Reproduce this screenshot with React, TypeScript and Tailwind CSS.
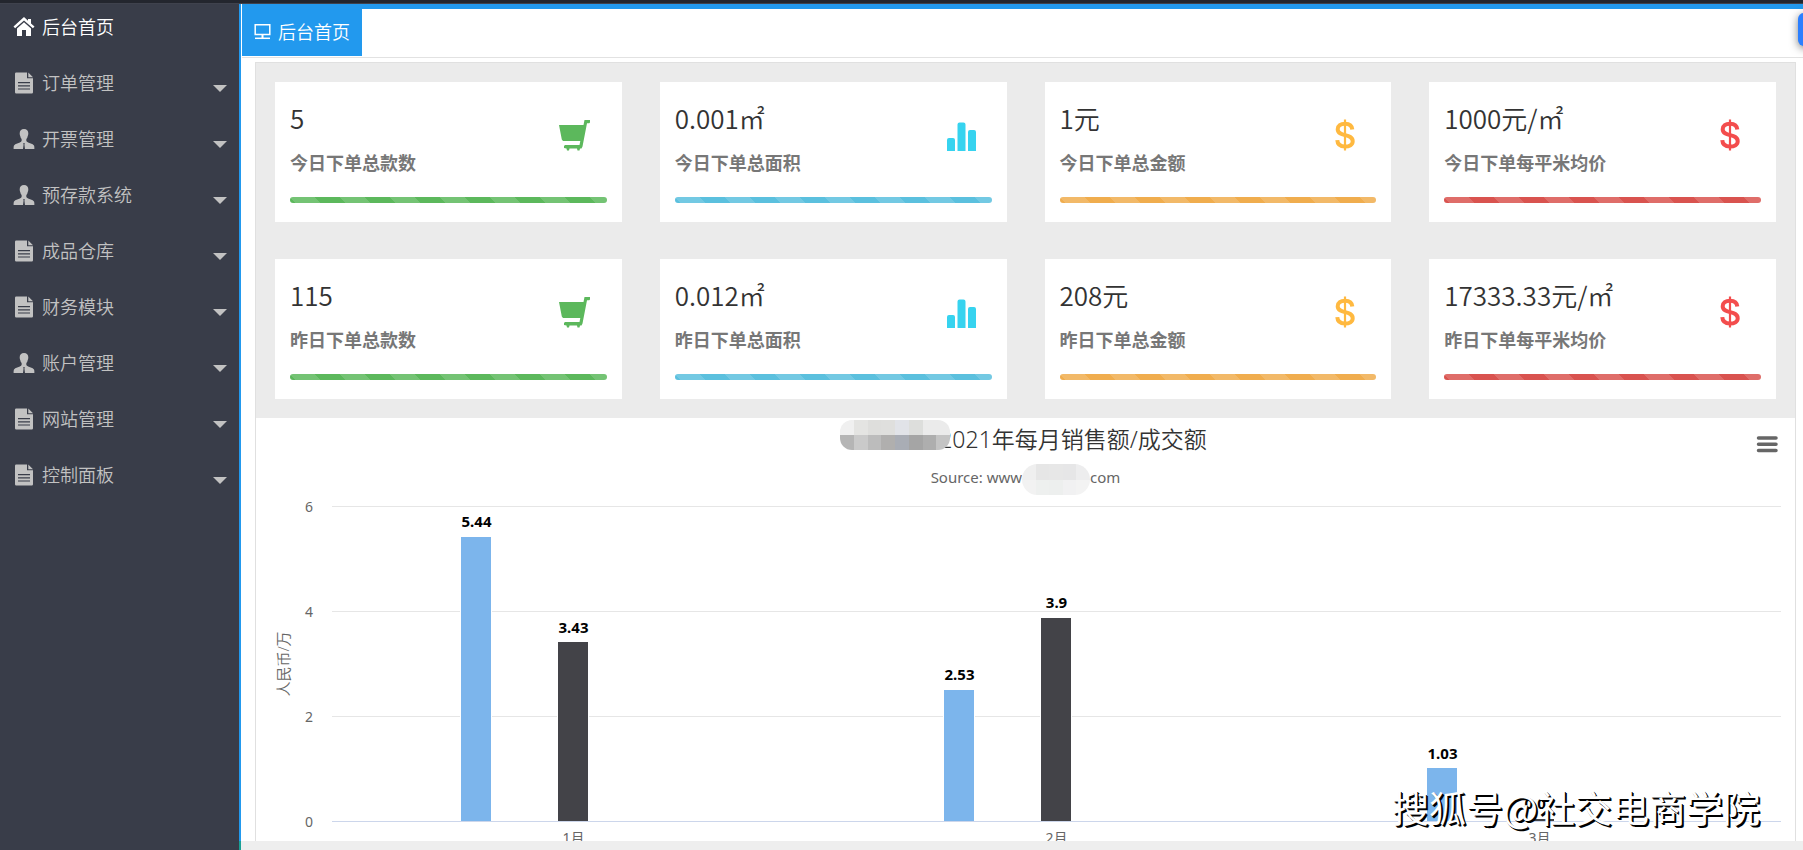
import type { ReactNode } from "react";

type IconName = "home" | "file" | "user";

const menus: { icon: IconName; label: string }[] = [
    { icon: "file", label: "订单管理" },
    { icon: "user", label: "开票管理" },
    { icon: "user", label: "预存款系统" },
    { icon: "file", label: "成品仓库" },
    { icon: "file", label: "财务模块" },
    { icon: "user", label: "账户管理" },
    { icon: "file", label: "网站管理" },
    { icon: "file", label: "控制面板" },
];

const kinds = {
    count: { icon: <CartIcon />, bar: "bg-[#5cb85c]" },
    area: { icon: <BarsIcon />, bar: "bg-[#5bc0de]" },
    amount: { icon: <DollarIcon className="text-[#ffb940]" />, bar: "bg-[#f0ad4e]" },
    price: { icon: <DollarIcon className="text-[#f34d4d]" />, bar: "bg-[#d9534f]" },
};

const stats: { kind: keyof typeof kinds; value: string; label: string }[] = [
    { kind: "count", value: "5", label: "今日下单总款数" },
    { kind: "area", value: "0.001㎡", label: "今日下单总面积" },
    { kind: "amount", value: "1元", label: "今日下单总金额" },
    { kind: "price", value: "1000元/㎡", label: "今日下单每平米均价" },
    { kind: "count", value: "115", label: "昨日下单总款数" },
    { kind: "area", value: "0.012㎡", label: "昨日下单总面积" },
    { kind: "amount", value: "208元", label: "昨日下单总金额" },
    { kind: "price", value: "17333.33元/㎡", label: "昨日下单每平米均价" },
];

const months = [
    { name: "1月", sales: 5.44, deals: 3.43 },
    { name: "2月", sales: 2.53, deals: 3.9 },
    { name: "3月", sales: 1.03, deals: 0.07 },
];

// --- ICONS ---
function MenuIcon({ name }: { name: IconName }) {
    return (
        <svg viewBox="0 0 22 22" className="h-[22px] w-[22px] shrink-0" fill="currentColor" aria-hidden="true">
            {name === "home" && (
                <>
                    <path d="M11 1 0.5 10.6l1.6 1.7L11 4.4l8.9 7.9 1.6-1.7L18 7.4V3h-3v1.7z" />
                    <path d="M11 6.2 4 12.4V20h5v-6h4v6h5v-7.6z" />
                </>
            )}
            {name === "file" && (
                <path
                    fillRule="evenodd"
                    d="M3.2 .5H14v5.8h6v14a1.2 1.2 0 0 1-1.2 1.2H3.2A1.2 1.2 0 0 1 2 20.3V1.7A1.2 1.2 0 0 1 3.2 .5zM15.3 .5 20 5.2h-4.7zM5 10v1.2h12V10zM5 13.2v1.2h12v-1.2zM5 16.4v1.2h12v-1.2z"
                />
            )}
            {name === "user" && (
                <path d="M11 1c2.8 0 4.3 1.7 4.3 4.3 0 1.3-.2 2-.6 2.9-.3.8-.3 1.5-1 2.3-.6.7-.6 2.7.2 3.2 2 1.3 6 2 7.1 3.7.4.7.4 2.2.4 3.6h-9.4l-.6-4.5.6-1.3h-2l.6 1.3-.6 4.5H.6c0-1.4 0-2.9.4-3.6 1.1-1.7 5.1-2.4 7.1-3.7.8-.5.8-2.5.2-3.2-.7-.8-.7-1.5-1-2.3-.4-.9-.6-1.6-.6-2.9C6.7 2.7 8.2 1 11 1z" />
            )}
        </svg>
    );
}

function CartIcon() {
    return (
        <svg viewBox="0 0 32 32" className="mr-[2px] h-8 w-8 text-[#5cb85c]" fill="currentColor" aria-hidden="true">
            <path d="M1 6h24.5L26.5 1H32v2.5l-.8.7H29L24.5 27.5l-1 2H22l-.5 2h-2l-.5-2h-7.5l-.5 2h-2l-.5-2L6 29v-2l1-1h14.5l.8-4H5L3.8 20.5z" />
        </svg>
    );
}

function BarsIcon() {
    return (
        <svg viewBox="0 0 32 32" className="h-8 w-8 text-[#36d3ef]" fill="currentColor" aria-hidden="true">
            <path d="M2 32V21a2 2 0 0 1 2-2h4a2 2 0 0 1 2 2v11zM12.5 32V5.5a2 2 0 0 1 2-2h4a2 2 0 0 1 2 2V32zM23 32V13a2 2 0 0 1 2-2h4a2 2 0 0 1 2 2v19z" />
        </svg>
    );
}

function DollarIcon({ className }: { className: string }) {
    return (
        <svg viewBox="0 0 32 32" className={`h-8 w-8 ${className}`} fill="none" stroke="currentColor" aria-hidden="true">
            <path strokeWidth="4" d="M23.3 10.5C23 6.5 20 4.7 16 4.7c-4.3 0-7.3 2-7.3 5.5 0 8 15 3.8 15 12 0 3.5-3.4 5.4-7.7 5.4-4.5 0-7.5-2.2-7.7-6.4" />
            <path strokeWidth="2.2" d="M16 .5v31" />
        </svg>
    );
}

function MonitorIcon() {
    return (
        <svg viewBox="0 0 17 17" className="h-[17px] w-[17px]" fill="none" stroke="currentColor" aria-hidden="true">
            <path strokeWidth="1.5" d="M1.2 1.8h14.6v9.6H1.2z" />
            <path strokeWidth="2" d="M8.5 11.5V15" />
            <path strokeWidth="1.5" d="M1 15.3h15" />
        </svg>
    );
}

// --- PIXELATED PATCHES ---
const titleMosaic = [
    ["#f0f0f0", "#e4e4e2", "#dededc", "#dfdfdd", "#e1e3e8", "#dddedc", "#ebebeb", "#ebebeb"],
    ["#b5b5b5", "#cacaca", "#bcbcbc", "#b0afae", "#a9adb5", "#a5a5a5", "#aeaeae", "#c4c4c4"],
];

const sourceMosaic = [
    ["#efefef", "#e6e6e6", "#e7e7e7", "#e6e6e7", "#ededee"],
    ["#f2f2f2", "#eef0ef", "#edefee", "#f1f1f2", "#f3f3f3"],
];

function Mosaic({ rows, className }: { rows: string[][]; className: string }) {
    return (
        <span className={`absolute flex flex-col overflow-hidden ${className}`} aria-hidden="true">
            {rows.map((row, i) => (
                <span key={i} className="flex flex-1">
                    {row.map((color, j) => (
                        <span key={j} className="flex-1" style={{ backgroundColor: color }} />
                    ))}
                </span>
            ))}
        </span>
    );
}

function StatCard({ kind, value, label }: { kind: keyof typeof kinds; value: string; label: string }) {
    const { icon, bar } = kinds[kind];
    return (
        <div className="h-[140px] bg-white px-[15px] pt-[18px]">
            <div className="flex items-start justify-between">
                <div>
                    <p className="text-[26px] leading-9 font-[350] whitespace-nowrap text-[#333]">{value}</p>
                    <p className="mt-2 text-[18px] leading-9 font-bold whitespace-nowrap text-[#777]">{label}</p>
                </div>
                <div className="mt-[19px] mr-[15px]">{icon}</div>
            </div>
            <div
                role="progressbar"
                aria-label={label}
                aria-valuenow={100}
                className={`mt-[17px] h-[6px] rounded-full bg-[linear-gradient(45deg,rgba(255,255,255,.15)_25%,transparent_25%,transparent_50%,rgba(255,255,255,.15)_50%,rgba(255,255,255,.15)_75%,transparent_75%)] bg-[length:50px_50px] ${bar}`}
            />
        </div>
    );
}

// --- CHART ---
const UNIT = 52.5;
const ZERO = 331;

function Bar({ x, shift, value, fill }: { x: string; shift: number; value: number; fill: string }) {
    const height = value * UNIT;
    const top = ZERO - height + 1;
    return (
        <g transform={`translate(${shift} 0)`}>
            <svg x={x} overflow="visible">
                <rect x={-16} y={top} width={31} height={height} fill={fill} stroke="#fff" />
                <text x={0} y={top - 9} textAnchor="middle" fill="#000" className="text-[15px] font-bold">
                    {value}
                </text>
            </svg>
        </g>
    );
}

function SalesChart() {
    return (
        <section className="min-h-0 flex-1 overflow-hidden bg-white font-['Noto_Sans','Noto_Sans_CJK_SC',sans-serif]">
            <header className="relative h-[72px] text-center">
                <h2 className="pt-1 text-[23px] leading-[34px] font-[350] text-[#333]">
                    <span className="relative mr-1 inline-block pl-[99px]">
                        2021年每月销售额/成交额
                        <Mosaic rows={titleMosaic} className="top-[-2px] left-0 h-[30px] w-[110px] rounded-xl" />
                    </span>
                </h2>
                <p className="mt-2 text-[15px] leading-[26px] text-[#666]">
                    Source: www
                    <span className="relative inline-block w-[68px]">
                        <Mosaic rows={sourceMosaic} className="top-[-19px] left-0 h-[31px] w-[68px] rounded-2xl" />
                    </span>
                    com
                </p>
                <button type="button" aria-label="Chart context menu" className="absolute top-[17px] right-4 text-[#666]">
                    <svg viewBox="0 0 24 20" className="h-5 w-6" stroke="currentColor" strokeWidth="3.5" strokeLinecap="round">
                        <path d="M3.5 3h17.5M3.5 9.3h17.5M3.5 15.6h17.5" />
                    </svg>
                </button>
            </header>
            <div className="flex pr-[14px]">
                <svg className="h-[360px] w-[76px] shrink-0" fill="#666">
                    <text transform="translate(33 174) rotate(-90)" textAnchor="middle" className="text-[15px] font-[350]">
                        人民币/万
                    </text>
                    {[6, 4, 2, 0].map((tick) => (
                        <text key={tick} x={57} y={ZERO - tick * UNIT + 6} textAnchor="end" className="text-[14px]">
                            {tick}
                        </text>
                    ))}
                </svg>
                <svg className="h-[360px] min-w-0 flex-1 overflow-visible" shapeRendering="crispEdges">
                    {[6, 4, 2].map((tick) => (
                        <rect key={tick} y={Math.round(ZERO - tick * UNIT)} width="100%" height="1" fill="#e6e6e6" />
                    ))}
                    {months.map((month, i) => {
                        const x = `${((i + 0.5) / months.length) * 100}%`;
                        return (
                            <g key={month.name}>
                                <Bar x={x} shift={-97} value={month.sales} fill="#7cb5ec" />
                                <Bar x={x} shift={0} value={month.deals} fill="#434348" />
                                <text x={x} y={ZERO + 22} textAnchor="middle" fill="#666" className="text-[14px]">
                                    {month.name}
                                </text>
                            </g>
                        );
                    })}
                    <rect y={ZERO} width="100%" height="1" fill="#ccd6eb" />
                </svg>
            </div>
        </section>
    );
}

function SideItem({ icon, children, active }: { icon: IconName; children: ReactNode; active?: boolean }) {
    return (
        <li>
            <a
                href="#"
                className={`flex items-center pr-3 pl-[13px] text-[18px] whitespace-nowrap ${active ? "h-[51px] pb-[5px] text-white" : "h-14 text-[#c2c2c2]"}`}
            >
                <MenuIcon name={icon} />
                <span className="mb-[2px] ml-[7px] flex-1 font-[350]">{children}</span>
                {!active && <span className="mt-[10px] border-x-[7px] border-t-[7px] border-x-transparent border-t-[#c2c2c2]" />}
            </a>
        </li>
    );
}

export default function App() {
    return (
        <div className="relative flex h-screen flex-col overflow-hidden bg-white font-['Noto_Sans_CJK_SC','Noto_Sans',sans-serif]">
            <div className="h-1 shrink-0 border-b border-[#3f424d] bg-[#23262e]" />
            <div className="flex min-h-0 flex-1">
                <nav className="w-[239px] shrink-0 bg-[#393d49]">
                    <ul>
                        <SideItem icon="home" active>后台首页</SideItem>
                        {menus.map((item) => (
                            <SideItem key={item.label} icon={item.icon}>{item.label}</SideItem>
                        ))}
                    </ul>
                </nav>
                <div className="flex w-[2px] shrink-0 flex-col bg-[#2299ee]">
                    <div className="mt-auto h-[9px] bg-[#1aa094]" />
                </div>
                <main className="flex min-w-0 flex-1 flex-col">
                    <div className="ml-px flex shrink-0 border-t-[5px] border-b border-t-[#2299ee] border-b-[#e2e2e2]">
                        <button type="button" className="mb-px flex h-[47px] w-[120px] items-center justify-center gap-[7px] bg-[#2299ee] pb-[3px] text-[18px] font-[350] text-white">
                            <MonitorIcon />
                            后台首页
                        </button>
                    </div>
                    <div className="mt-1 mr-[7px] ml-[14px] flex min-h-0 flex-1 flex-col border border-b-0 border-[#e0e0e0]">
                        <div className="grid shrink-0 grid-cols-4 gap-x-[38px] gap-y-[37px] bg-[#ebebeb] px-[19px] py-[19px]">
                            {stats.map((stat) => (
                                <StatCard key={stat.label} {...stat} />
                            ))}
                        </div>
                        <SalesChart />
                    </div>
                    <div className="h-[9px] shrink-0 bg-[#eee]" />
                </main>
            </div>

            {/* Floating button, mostly outside of the window */}
            <button type="button" aria-label="展开" className="absolute top-[13px] -right-7 h-[33px] w-[33px] rounded-md bg-[#2b7fff] shadow-[0_2px_8px_rgba(0,0,0,.5)]" />
            <p className="pointer-events-none absolute right-[43px] bottom-[21px] text-[37px] leading-[44px] font-normal whitespace-nowrap text-white [text-shadow:1px_1px_0_#000,2px_2px_0_#000]">
                搜狐号@社交电商学院
            </p>
        </div>
    );
}
